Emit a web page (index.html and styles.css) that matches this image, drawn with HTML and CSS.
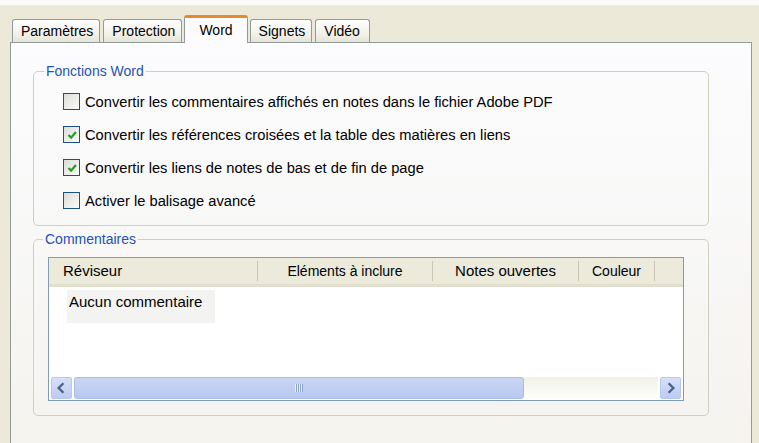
FILE: index.html
```html
<!DOCTYPE html>
<html lang="fr">
<head>
  <meta charset="UTF-8">
  <title>Word</title>
  <link rel="stylesheet" href="styles.css">
</head>
<body>
  <div class="tabs">
    <div class="tab">Paramètres</div>
    <div class="tab">Protection</div>
    <div class="tab active">Word</div>
    <div class="tab">Signets</div>
    <div class="tab">Vidéo</div>
  </div>

  <div class="page">
    <fieldset class="group word">
      <legend>Fonctions Word</legend>
      <label class="check"><span class="box"></span>Convertir les commentaires affichés en notes dans le fichier Adobe PDF</label>
      <label class="check"><span class="box checked"><svg viewBox="0 0 16 16"><path d="M4 8 L7 11 L12.5 4.5" /></svg></span>Convertir les références croisées et la table des matières en liens</label>
      <label class="check"><span class="box checked"><svg viewBox="0 0 16 16"><path d="M4 8 L7 11 L12.5 4.5" /></svg></span>Convertir les liens de notes de bas et de fin de page</label>
      <label class="check"><span class="box"></span>Activer le balisage avancé</label>
    </fieldset>

    <fieldset class="group comments">
      <legend>Commentaires</legend>
      <div class="list">
        <div class="list-head">
          <div class="col col-rev">Réviseur</div>
          <div class="col col-elem">Eléments à inclure</div>
          <div class="col col-notes">Notes ouvertes</div>
          <div class="col col-color">Couleur</div>
        </div>
        <div class="list-body">
          <div class="row">Aucun commentaire</div>
        </div>
        <div class="hscroll">
          <div class="sb-btn"><svg viewBox="0 0 20 20"><path d="M12 5 L7 10 L12 15" /></svg></div>
          <div class="sb-track">
            <div class="sb-thumb"><span class="grip"></span></div>
          </div>
          <div class="sb-btn"><svg viewBox="0 0 20 20"><path d="M8 5 L13 10 L8 15" /></svg></div>
        </div>
      </div>
    </fieldset>
  </div>
</body>
</html>
```

FILE: styles.css
```css
body {
  margin: 0;
  height: 443px;
  overflow: hidden;
  font-family: "Liberation Sans", Arial, sans-serif;
  font-size: 14px;
  color: #000;
  background: #ece9d8;
  border-top: 5px solid #fafaf6;
}

/* onglets */
.tabs {
  display: flex;
  align-items: flex-end;
  height: 37px;
  padding-left: 12px;
  position: relative;
  z-index: 1;
}
.tab {
  height: 22px;
  line-height: 22px;
  padding: 0 6px 0 8px;
  margin-right: 3px;
  border: 1px solid #919b9c;
  border-bottom: none;
  border-radius: 3px 3px 0 0;
  background: linear-gradient(#fefefe, #f1efe6 70%, #e6e3d6);
}
.tab:last-child {
  padding-right: 9px;
}
.tab.active {
  height: 25px;
  line-height: 24px;
  padding: 0 14px;
  margin: 0 2px -1px -1px;
  border-top: 3px solid #e68b2c;
  background: #fcfcfe;
}

/* page */
.page {
  margin-left: 10px;
  width: 742px;
  height: 420px;
  border: 1px solid #919b9c;
  border-bottom: none;
  background: linear-gradient(#fcfcfe, #f4f3ee);
  padding: 20px 0 0 22px;
  box-sizing: border-box;
}

.group {
  width: 676px;
  margin: 0;
  border: 1px solid #d0d0bf;
  border-radius: 5px;
  box-sizing: border-box;
}
.group legend {
  color: #2352b8;
  padding: 0 2px;
  line-height: 16px;
}

.word {
  padding: 14px 10px 16px 29px;
  font-size: 14.7px;
}
.word legend {
  font-size: 14px;
  margin-left: -19px;
}
.check {
  display: flex;
  align-items: center;
  height: 17px;
  margin-bottom: 16px;
}
.check:last-child {
  margin-bottom: 0;
}
.box {
  width: 15px;
  height: 15px;
  border: 1px solid #1c5180;
  background: linear-gradient(135deg, #dcdcd7, #fbfbf9);
  margin-right: 5px;
  display: flex;
  align-items: center;
  justify-content: center;
}
.box svg {
  width: 14px;
  height: 14px;
}
.box path {
  fill: none;
  stroke: #21a121;
  stroke-width: 2.6;
}

.comments {
  margin-top: 5px;
  padding: 10px 24px 14px 14px;
}
.comments legend {
  margin-left: -5px;
}

/* liste */
.list {
  height: 144px;
  border: 1px solid #7f9db9;
  background: #fff;
  box-sizing: border-box;
  display: flex;
  flex-direction: column;
}
.list-head {
  display: flex;
  height: 29px;
  background: #ebeadb;
  border-bottom: 3px solid #e2decd;
  box-sizing: border-box;
}
.col {
  border-right: 1px solid #c7c5b2;
  margin: 3px 0;
  line-height: 20px;
  box-sizing: border-box;
}
.col-rev {
  width: 209px;
  padding-left: 14px;
  font-size: 15px;
}
.col-elem {
  width: 175px;
  text-align: center;
}
.col-notes {
  width: 146px;
  text-align: center;
  font-size: 15px;
}
.col-color {
  width: 76px;
  text-align: center;
}

.list-body {
  flex: 1;
  padding: 3px 0 0 18px;
}
.row {
  width: 148px;
  height: 33px;
  box-sizing: border-box;
  padding: 3px 0 0 2px;
  background: #f3f3f1;
  font-size: 15px;
}

/* barre de defilement */
.hscroll {
  display: flex;
  height: 22px;
  margin: 0 2px 1px 2px;
  gap: 2px;
}
.sb-btn {
  width: 21px;
  border: 1px solid #b7c8f0;
  border-radius: 2px;
  background: linear-gradient(#d6e0fa, #bccbf2);
  box-sizing: border-box;
}
.sb-btn svg {
  width: 19px;
  height: 20px;
}
.sb-btn path {
  fill: none;
  stroke: #4d6185;
  stroke-width: 2.5;
}
.sb-track {
  flex: 1;
  background: linear-gradient(#f3f1e9, #fefefb);
}
.sb-thumb {
  width: 450px;
  height: 100%;
  border: 1px solid #a9bbe7;
  border-radius: 3px;
  background: linear-gradient(#cad7f5, #b8c9ee);
  box-sizing: border-box;
  display: flex;
  align-items: center;
  justify-content: center;
}
.grip {
  width: 8px;
  height: 8px;
  background: repeating-linear-gradient(90deg, #eef2fd 0 1px, #8c9fce 1px 2px);
}
```
